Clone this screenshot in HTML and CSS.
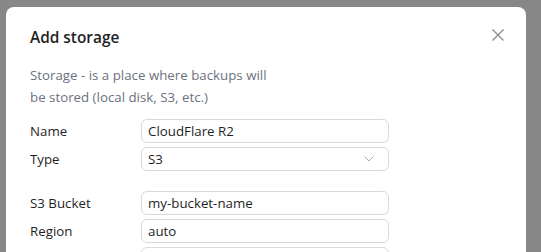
FILE: index.html
```html
<!DOCTYPE html>
<html lang="en">
<head>
  <meta charset="UTF-8" />
  <title>Add storage</title>
  <link rel="stylesheet" href="styles.css">
</head>
<body>

  <div class="modal">

    <div class="modal-header">
      <h2>Add storage</h2>
      <button class="close-btn" aria-label="Close">
        <svg width="12" height="12" viewBox="0 0 12 12">
          <path d="M0.5 0.5 L11.5 11.5 M11.5 0.5 L0.5 11.5" stroke="#8c8c8c" stroke-width="1.3" fill="none"/>
        </svg>
      </button>
    </div>

    <p class="description">Storage - is a place where backups will be stored (local disk, S3, etc.)</p>

    <div class="form">

      <div class="row">
        <label>Name</label>
        <input type="text" value="CloudFlare R2" />
      </div>

      <div class="row">
        <label>Type</label>
        <div class="select">
          <span>S3</span>
          <svg width="10" height="6" viewBox="0 0 10 6">
            <path d="M0.5 0.5 L5 5 L9.5 0.5" stroke="#b0b0b0" stroke-width="1" fill="none"/>
          </svg>
        </div>
      </div>

      <div class="spacer"></div>

      <div class="row">
        <label>S3 Bucket</label>
        <input type="text" value="my-bucket-name" />
      </div>

      <div class="row">
        <label>Region</label>
        <input type="text" value="auto" />
      </div>

      <div class="row">
        <label></label>
        <input type="text" value="" />
      </div>

    </div>

  </div>

</body>
</html>
```

FILE: styles.css
```css
* {
  margin: 0;
  padding: 0;
  box-sizing: border-box;
}

body {
  font-family: 'Open Sans', sans-serif;
  background-color: #878787;
  color: #1f1f1f;
  height: 252px;
  overflow: hidden;
}

.modal {
  width: 520px;
  margin: 7px 0 0 6px;
  background-color: #fff;
  border-radius: 8px;
  padding: 19px 24px 24px;
}

.modal-header {
  display: flex;
  justify-content: space-between;
  align-items: flex-start;
}

.modal-header h2 {
  font-size: 15.4px;
  font-weight: 600;
  line-height: 24px;
}

.close-btn {
  background: none;
  border: none;
  margin-top: 3px;
  margin-right: -2px;
  width: 12px;
  height: 12px;
  display: flex;
  cursor: pointer;
}

.description {
  width: 250px;
  margin-top: 14px;
  font-size: 13.3px;
  line-height: 22px;
  color: #6b7280;
}

.form {
  margin-top: 11px;
}

.row {
  display: flex;
  align-items: center;
  margin-bottom: 4px;
}

.row label {
  width: 111px;
  font-size: 13.3px;
}

.row input,
.select {
  width: 248px;
  height: 24px;
  border: 1px solid #d9d9d9;
  border-radius: 6px;
  padding: 0 6px;
  font-family: inherit;
  font-size: 13.3px;
  color: #1f1f1f;
  background: #fff;
}

.select {
  display: flex;
  align-items: center;
  justify-content: space-between;
  padding-right: 14px;
}

.spacer {
  height: 16px;
}
```
